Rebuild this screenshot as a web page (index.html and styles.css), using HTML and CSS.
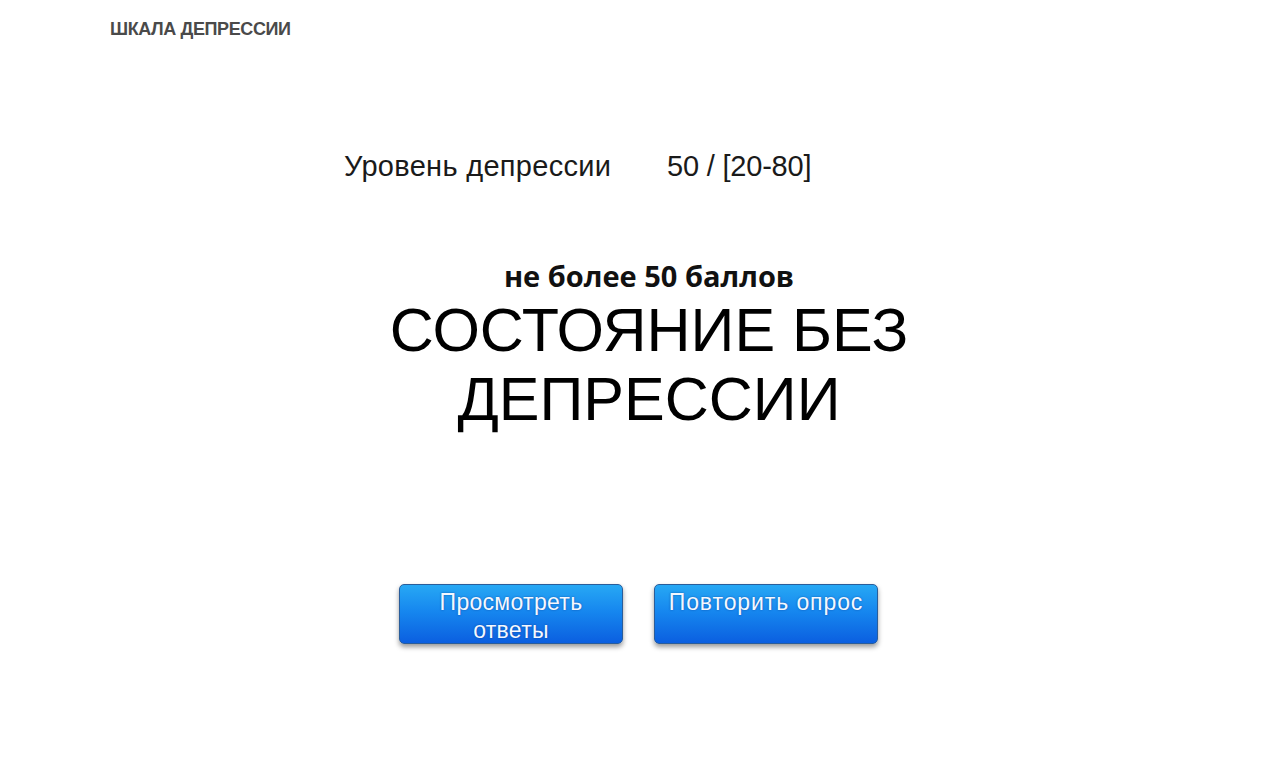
FILE: index.html
```html
<!DOCTYPE html>
<html lang="ru">
<head>
<meta charset="utf-8">
<link rel="stylesheet" href="styles.css">
</head>
<body>
<div class="page">
  <header class="title">ШКАЛА ДЕПРЕССИИ</header>
  <div class="level">
    <span class="level-label">Уровень депрессии</span>
    <span class="level-value">50 / [20-80]</span>
  </div>
  <div class="result">
    <div class="points">не более 50 баллов</div>
    <div class="state">СОСТОЯНИЕ БЕЗ<br>ДЕПРЕССИИ</div>
  </div>
  <div class="actions">
    <button class="btn">Просмотреть<br>ответы</button>
    <button class="btn btn-wide">Повторить опрос</button>
  </div>
</div>
</body>
</html>
```

FILE: styles.css
```css
html, body {
  margin: 0;
  padding: 0;
  background: #fff;
}
.page {
  width: 1280px;
  height: 768px;
  font-family: "Liberation Sans", Arial, sans-serif;
  color: #111;
}
.title {
  padding: 18px 0 0 110px;
  font-size: 18px;
  font-weight: bold;
  color: #4a4a4a;
  line-height: 22px;
  letter-spacing: -0.4px;
}
.level {
  display: flex;
  margin: 108px 0 0 344px;
  font-size: 29px;
  line-height: 36px;
  color: #1a1a1a;
}
.level-label {
  width: 323px;
  letter-spacing: 0.3px;
}
.level-value {
  letter-spacing: -0.2px;
}
.result {
  margin-top: 74px;
  padding-left: 18px;
  text-align: center;
}
.points {
  font-family: "Open Sans", sans-serif;
  font-weight: bold;
  font-size: 29px;
  line-height: 36px;
  color: #111;
}
.state {
  margin-top: 2px;
  font-size: 61px;
  line-height: 69px;
  color: #000;
}
.actions {
  display: flex;
  justify-content: center;
  gap: 31px;
  margin-top: 150px;
  padding-right: 3px;
}
.btn {
  width: 224px;
  height: 60px;
  padding: 3px 6px 0;
  box-sizing: border-box;
  border: 1px solid #2a5d9a;
  border-radius: 5px;
  background: linear-gradient(to bottom, #27a8f4 0%, #1687ef 45%, #0b5fe0 100%);
  color: #f4f8ff;
  font-family: "Liberation Sans", Arial, sans-serif;
  font-size: 23px;
  line-height: 28px;
  letter-spacing: 0.3px;
  text-align: center;
  display: flex;
  flex-direction: column;
  align-items: center;
  justify-content: flex-start;
  text-shadow: 0 0 2px rgba(0, 40, 120, 0.6);
  box-shadow: 0 3px 5px rgba(0, 0, 0, 0.4);
}
.btn-wide {
  letter-spacing: 0.9px;
}
```
